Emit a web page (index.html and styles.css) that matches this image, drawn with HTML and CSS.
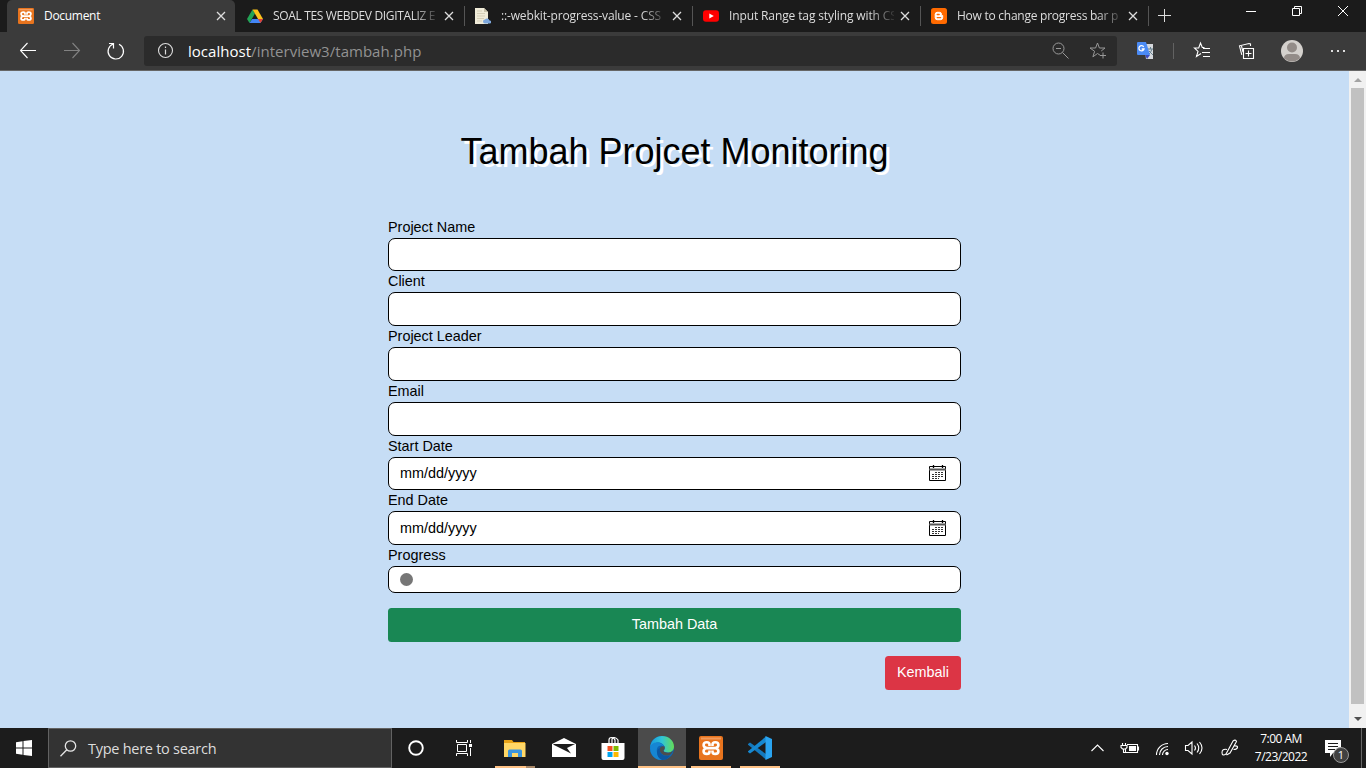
FILE: index.html
```html
<!DOCTYPE html>
<html lang="en">
<head>
<meta charset="utf-8">
<title>Document</title>
<link rel="stylesheet" href="styles.css">
</head>
<body>
<svg width="0" height="0" class="defs">
  <symbol id="close" viewBox="0 0 10 10"><path d="M1 1l8 8M9 1L1 9" fill="none" stroke="#ddd" stroke-width="1.3"/></symbol>
  <symbol id="xampp" viewBox="0 0 24 24">
    <rect width="24" height="24" rx="2" fill="#e8741e"/><path d="M2 1.500h20v2H2z" fill="#f29a5c"/>
    <g fill="none" stroke="#fff" stroke-width="2.600" stroke-linejoin="round"><path d="M10.500 10V8.500Q10.500 6.300 7.800 6.300Q4.600 6.300 4.600 9Q4.600 11.200 7.500 12.100Q4.600 13 4.600 15.200Q4.600 17.900 7.800 17.900Q10.500 17.900 10.500 15.700V14.500"/><path d="M13.500 10V8.500Q13.500 6.300 16.200 6.300Q19.400 6.300 19.400 9Q19.400 11.200 16.500 12.100Q19.400 13 19.400 15.200Q19.400 17.900 16.200 17.900Q13.500 17.900 13.500 15.700V14.500M7.500 12.100h9"/></g>
  </symbol>
  <symbol id="calendar" viewBox="0 0 18 18">
    <path d="M.5 2.500h16v14h-16z" fill="#fff" stroke="#000"/><path d="M0 5.500h17" stroke="#555" stroke-width="2"/>
    <path d="M4.500 1v3M13.500 1v3" stroke="#000" stroke-width="1.300"/>
    <path d="M6 8.500h9M3 10.500h12M3 12.500h12M3 14.500h7" stroke="#333" stroke-dasharray="2 1"/>
  </symbol>
</svg>
<div class="screen">
  <header class="tabs">
    <div class="tab active"><svg class="fav"><use href="#xampp"/></svg><span class="title t1">Document</span><svg class="x"><use href="#close"/></svg></div>
    <div class="tab"><svg class="fav" viewBox="0 0 16 16"><path d="M5.500 1.500L0 11l2.500 4L8 5.500z" fill="#23a455"/><path d="M5.500 1.500h5L16 11h-5z" fill="#fcc21b"/><path d="M5.200 11H16l-2.500 4h-11z" fill="#4285f4"/><path d="M11 11h5l-2.500 4z" fill="#e34133"/></svg><span class="title t2 fade">SOAL TES WEBDEV DIGITALIZ E</span><svg class="x"><use href="#close"/></svg></div>
    <div class="tab"><svg class="fav" viewBox="0 0 16 16"><path d="M0 0h9l4 4v12H0z" fill="#f0ecd9"/><path d="M9 0v4h4z" fill="#c7c2aa"/><path d="M2 3h5M2 5.500h8M2 8h8M2 10.500h7M2 13h5" stroke="#d5cfb8"/><path d="M10 15.500a2 2 0 0 1 0-4a2.500 2.500 0 0 1 4.500 1a1.500 1.500 0 0 1 .5 3z" fill="#7da7dc"/></svg><span class="title t3 fade">::-webkit-progress-value - CSS</span><svg class="x"><use href="#close"/></svg></div>
    <div class="tab"><svg class="fav" viewBox="0 0 16 16"><rect y="2.300" width="16" height="11.400" rx="3" fill="#f00"/><path d="M6.300 5.500v5l4.500-2.500z" fill="#fff"/></svg><span class="title t4 fade">Input Range tag styling with CS</span><svg class="x"><use href="#close"/></svg></div>
    <div class="tab"><svg class="fav" viewBox="0 0 16 16"><rect width="16" height="16" rx="2.500" fill="#ff6a00"/><path d="M6 4.300h2.500a2 2 0 0 1 2 2c0 1 .3 1.200 1.200 1.200v2a2.200 2.200 0 0 1-2.200 2.200H6.200a2 2 0 0 1-2-2V6.200A2 2 0 0 1 6 4.300z" fill="#fff" stroke="#fff" stroke-width="1"/><path d="M6.200 6.500h2M6.200 9.600h3.500" stroke="#ff6a00" stroke-width="1.300" stroke-linecap="round"/></svg><span class="title t5 fade">How to change progress bar p</span><svg class="x"><use href="#close"/></svg></div>
    <svg class="newtab" viewBox="0 0 14 14"><path d="M6.500 0v13M0 6.500h13" stroke="#ddd"/></svg>
    <svg class="winctl" viewBox="0 0 106 14"><g fill="none" stroke="#fff"><path d="M0 7.500h10M46.500 4.500h7v7h-7zM48.500 4.500v-2h7v7h-2M92 2l10 10M102 2L92 12"/></g></svg>
  </header>
  <div class="toolbar">
    <svg class="nav" viewBox="0 0 112 20"><g fill="none" stroke-width="1.100"><path d="M16 9.500H.5M7.500 2L.5 9.500L7.500 17" stroke="#fff"/><path d="M44 9.500h15.500M52.500 2l7 7.500l-7 7.500" stroke="#828282"/><path d="M93.300 3A7.700 7.700 0 1 0 99 3.300M93.500 7.500V2.500H89" stroke="#fff" stroke-width="1.200"/></g></svg>
    <div class="address">
      <svg class="info" viewBox="0 0 16 16"><circle cx="8.500" cy="7.500" r="7" fill="none" stroke="#ddd" stroke-width="1.100"/><path d="M8.500 6.500v5M8.500 3.500v1.500" stroke="#ddd" stroke-width="1.200"/></svg>
      <span class="url"><b>localhost</b>/interview3/tambah.php</span>
      <svg class="addricons" viewBox="0 0 56 18"><g fill="none" stroke="#999"><circle cx="6.500" cy="6.500" r="5.500"/><path d="M4 6.500h5M10.500 10.500l6 6"/><path d="M48.500 13.500l-3-2l-4.600 3.300l1.700-5.500l-4.600-3.300h5.600L45.500 1l1.900 5h5.600l-3.800 3M51 10.500v6M48 13.500h6"/></g></svg>
    </div>
    <svg class="exticons" viewBox="0 0 206 26">
      <path d="M7 6h9v15H9z" fill="#d6d9dd"/><path d="M11 11h5M13.500 9v2M15 11q-1 4-4 6M12 13l4 4" stroke="#66808d" fill="none"/>
      <path d="M1 4h8l4 13H1q-1 0-1-1V5q0-1 1-1z" fill="#4b8bf5"/><path d="M8 17h5l-3 4z" fill="#3c4dc0"/><path d="M6.700 8.900A2.600 2.600 0 1 0 7 11H4.700" fill="none" stroke="#fff" stroke-width="1.300"/>
      <path d="M36.500 5v16" stroke="#626262"/>
      <g fill="none" stroke="#fff" stroke-width="1.100"><path d="M67.500 9.500h-2.200L63.500 5l-1.800 5H57.500l3.500 3.300l-1.500 5.200l4.500-3M66 10.500h7M65 14.500h8M66 18.500h7"/><path d="M106.500 10.500h10v10h-10zM111.500 12.500v6M108.500 15.500h6M113.500 8V6l-1.500-.5l-9.500 2.300l2.300 9M106 14l-1.500-6"/></g>
      <circle cx="155" cy="13" r="11" fill="#d4d1cd"/><circle cx="155" cy="9.500" r="5" fill="#938c88"/><path d="M147 20.500q0-4.500 5-4.500h6q5 0 5 4.500q-8 6-16 0z" fill="#938c88"/>
      <path d="M194 12h2v2h-2zM200 12h2v2h-2zM206 12h2v2h-2z" fill="#ddd"/>
    </svg>
  </div>
  <div class="viewport">
    <main>
      <h1>Tambah Projcet Monitoring</h1>
      <form>
        <div class="row"><label>Project Name</label><div class="field"></div></div>
        <div class="row"><label>Client</label><div class="field"></div></div>
        <div class="row"><label>Project Leader</label><div class="field"></div></div>
        <div class="row"><label>Email</label><div class="field"></div></div>
        <div class="row"><label>Start Date</label><div class="field"><span>mm/dd/yyyy</span><svg class="cal"><use href="#calendar"/></svg></div></div>
        <div class="row"><label>End Date</label><div class="field"><span>mm/dd/yyyy</span><svg class="cal"><use href="#calendar"/></svg></div></div>
        <div class="row"><label>Progress</label><div class="field range"><i class="thumb"></i></div></div>
        <div class="btn submit">Tambah Data</div>
        <div class="btn back">Kembali</div>
      </form>
    </main>
    <div class="scroll"><i class="up"></i><i class="bar"></i><i class="down"></i></div>
  </div>
  <footer class="taskbar">
    <div class="start"><svg width="16" height="16" viewBox="0 0 16 16"><path d="M0 2.200L6.500 1.300V7.500H0zM7.500 1.100L16 0v7.500H7.500zM0 8.500h6.500v6.200L0 13.800zM7.500 8.500H16V16l-8.500-1.100z" fill="#fff"/></svg></div>
    <div class="search"><svg width="17" height="17" viewBox="0 0 17 17"><g fill="none" stroke="#e5e5e5" stroke-width="1.300"><circle cx="10.500" cy="6" r="5.200"/><path d="M6.800 9.800L.5 16.300"/></g></svg><span>Type here to search</span></div>
    <div class="apps">
      <div class="app"><svg width="16" height="16"><circle cx="8" cy="8" r="6.800" fill="none" stroke="#fff" stroke-width="1.900"/></svg></div>
      <div class="app view"><svg width="17" height="16"><g fill="none" stroke="#fff"><path d="M1.500 4.500h9v7h-9zM.5 0v2.500h11V0M.5 16v-2.500h11V16M14.500 0v3M14.500 8v8"/></g><path d="M13 4h3v3h-3z" fill="#fff"/></svg></div>
      <div class="app run folder"><svg width="22" height="19" viewBox="0 0 22 19"><path d="M0 1h8l1.500 2H21v15H0z" fill="#e8a317"/><path d="M0 4h21.500v14H0z" fill="#ffd766"/><path d="M4 18v-6q0-1.500 1.500-1.500h11Q18 10.500 18 12v6h-4v-4H8v4z" fill="#3b95dd"/><path d="M8 14h6v4H8z" fill="#ffd766"/></svg></div>
      <div class="app"><svg width="24" height="20"><path d="M0 6L12 0l12 6v13H0z" fill="#fff"/><path d="M1 6h22l-8 4l4 5.500L2 7z" fill="#1c1c1c"/></svg></div>
      <div class="app"><svg width="24" height="24" viewBox="0 0 24 24"><path d="M8 7V4q0-2.500 2.500-2.500T14 4v3M11 7V3q3-3 6 1v3" fill="none" stroke="#fff" stroke-width="1.200"/><path d="M.5 7h23v15q0 2-2 2h-19q-2 0-2-2z" fill="#fff"/><path d="M6.500 10h5v5h-5z" fill="#f25022"/><path d="M12.500 10h5v5h-5z" fill="#7fba00"/><path d="M6.500 16h5v5h-5z" fill="#00a4ef"/><path d="M12.500 16h5v5h-5z" fill="#ffb900"/></svg></div>
      <div class="app current"><svg width="24" height="24" viewBox="0 0 24 24"><defs><linearGradient id="e1"><stop offset="0" stop-color="#1698df"/><stop offset=".5" stop-color="#31c5d6"/><stop offset="1" stop-color="#65dc55"/></linearGradient></defs><circle cx="12" cy="12" r="12" fill="#0d65b5"/><path d="M0 11.500C1 4 6 0 12 0c7 0 12 5 12 10.500c0 4-3 6-6 6c-3 0-4.500-1-4.500-2q1.500-1 1.200-3C14 7.500 10 6 7 6.500Q2 7.500 0 11.500z" fill="url(#e1)"/><path d="M0 12q1-5.500 7-5.500c4 0 7 2.500 7.500 5q-2-3-5.500-1.500c-3 1.500-3 7 0 10.500q1.500 2.500 4.500 3.300Q6 25 2 19Q0 16 0 12z" fill="#1686d3"/><path d="M14.700 10.500q.5 2.500-1.200 4q0 2 4.500 2.200q3 0 5-2q-1 2.500-3 4.300q-5 1.500-8-1t-2-6q1-2.500 4.700-1.500z" fill="#4d4d4d"/><path d="M10 12q-1 4 2 6.500t8 1Q17 24 12 24Q7 22 7 16q0-3 3-4z" fill="#0c57a2"/></svg></div>
      <div class="app run"><svg width="24" height="24"><use href="#xampp"/></svg></div>
      <div class="app run"><svg width="24" height="24" viewBox="0 0 24 24"><path d="M0 8l2-1.500L18 18v5.500L0 8.800z" fill="#1479bd"/><path d="M0 16l2 1.500L18 6V.5L0 15.200z" fill="#1688d0"/><path d="M17.500 0L24 3v18l-6.500 3z" fill="#2aa4f0"/></svg></div>
    </div>
    <svg class="tray" viewBox="0 0 148 20"><g fill="none" stroke="#fff" stroke-width="1.100"><path d="M.5 13L6.500 7l6 6"/><path d="M36 6.500h10.500v8h-12v-4M47.500 8.500v4M31.500 5v2M34.500 5v2M30 7.500h6v2l-1.500 1.500h-3L30 9.500zM32.500 11v3.500h2"/><path d="M65.500 17A11.500 11.500 0 0 1 77 5.500M68.500 17A8.500 8.500 0 0 1 77 8.500M71.500 17A5.500 5.500 0 0 1 77 11.500"/><path d="M94.500 7.500h2.500l4-3.500v12l-4-3.500h-2.500zM103.500 7.500q2 2.500 0 5M106 5.500q3.500 4.500 0 9M108.500 4q5 6 0 12"/><path d="M136 11.500q-5-1-5 3t4 1.500l7-13q2.500-2 3.500 .5l-6.500 11.500l-3.500 2M142.500 8q4.500-.5 4 1.500t-4 2"/></g><path d="M38 8h7v5h-7z" fill="#fff"/><circle cx="76" cy="15.500" r="1.700" fill="#fff"/></svg>
    <div class="clock"><span>7:00 AM</span><span>7/23/2022</span></div>
    <div class="notice"><svg width="17" height="18"><path d="M0 0h16v13H8l-3 4v-4H0z" fill="#fff"/><path d="M3 3.500h10M3 6.500h10M3 9.500h7" stroke="#1c1c1c"/></svg><span class="badge">1</span></div>
    <i class="edge"></i>
  </footer>
</div>
</body>
</html>
```
FILE: styles.css
```css
* { box-sizing: border-box; }
body { margin: 0; font-family: "Open Sans", "Noto Sans", sans-serif; overflow: hidden; }
svg { display: block; flex: none; }
.defs { position: absolute; }
.screen { width: 1366px; height: 768px; display: flex; flex-direction: column; }

.tabs { height: 32px; background: #1b1b1b; display: flex; padding-left: 7px; }
.tab { width: 228px; height: 32px; display: flex; align-items: center; padding: 0 11px 0 10px; position: relative; color: #ddd; font-size: 12px; }
.tab + .tab::after { content: ""; position: absolute; right: 0; top: 6px; width: 1px; height: 20px; background: #555; }
.tab.active { background: #3b3b3b; border-radius: 5px 5px 0 0; color: #fff; padding: 0 9px 0 11px; margin-right: 2px; }
.fav { width: 16px; height: 16px; }
.title { width: 165px; margin-left: 10px; white-space: nowrap; line-height: 18px; }
.t1 { letter-spacing: -.3px; }
.t2 { letter-spacing: -.35px; }
.t3 { letter-spacing: -.15px; }
.t4 { letter-spacing: -.12px; }
.t5 { letter-spacing: -.25px; }
.fade { -webkit-mask-image: linear-gradient(90deg, #000 140px, transparent 168px); }
.x { width: 10px; height: 10px; margin-left: auto; }
.newtab { width: 14px; height: 14px; margin: 9px 0 0 9px; }
.winctl { width: 106px; height: 14px; margin: 4px 14px 0 auto; }

.toolbar { height: 39px; background: #3b3b3b; border-bottom: 1px solid #666; display: flex; align-items: center; padding-left: 20px; }
.nav { width: 112px; height: 20px; margin-right: 12px; }
.address { width: 973px; height: 30px; background: #2b2b2b; border-radius: 3px; display: flex; align-items: center; padding: 0 9px 0 13px; }
.info { width: 16px; height: 16px; margin-right: 15px; overflow: visible; }
.url { font-size: 15px; color: #929292; white-space: nowrap; letter-spacing: .03px; }
.url b { font-weight: 400; color: #fff; }
.addricons { width: 56px; height: 18px; margin-left: auto; }
.exticons { width: 206px; height: 26px; margin-left: 20px; overflow: visible; }

.viewport { height: 657px; display: flex; font-family: "Liberation Sans", Arial, sans-serif; background: #c6ddf5; }
main { width: 1349px; display: flex; flex-direction: column; align-items: center; }
h1 { font-size: 36px; font-weight: 400; line-height: 43px; margin: 59px 0 43.620px; text-shadow: 3px 3px 0 #fff; white-space: nowrap; color: #000; }
form { width: 573px; font-size: 14.400px; color: #000; display: flex; flex-direction: column; }
.row label { display: block; height: 21.150px; line-height: 21.600px; }
.field { height: 33.600px; border: 1px solid #000; border-radius: 7px; background: #fff; display: flex; align-items: center; justify-content: space-between; padding: 0 13px 0 11px; }
.cal { width: 18px; height: 18px; }
.range { height: 27px; }
.thumb { width: 13px; height: 13px; border-radius: 50%; background: #767676; }
.btn { height: 34px; border-radius: 3.500px; color: #fff; text-align: center; line-height: 33px; }
.submit { background: #198754; margin-top: 15px; }
.back { background: #dc3545; width: 76px; align-self: flex-end; margin-top: 14px; }
.scroll { width: 17px; background: #f1f1f1; display: flex; flex-direction: column; align-items: center; }
.up { border: 4px solid transparent; border-top: 0; border-bottom: 4px solid #a3a3a3; margin: 7px 0 6px; }
.bar { width: 13px; height: 616px; background: #c1c1c1; }
.down { border: 4px solid transparent; border-bottom: 0; border-top: 4px solid #505050; margin-top: 13px; }

.taskbar { height: 40px; background: #1c1c1c; display: flex; color: #fff; }
.start { width: 48px; display: flex; align-items: center; justify-content: center; }
.search { width: 344px; background: #333; border: 1px solid #626262; display: flex; align-items: center; gap: 11px; padding-left: 11px; font-size: 14.500px; letter-spacing: -.27px; color: #ddd; }
.apps { display: grid; grid-template-columns: 48px 50px 49px 49px 50px 48px 49px 49px; }
.app { display: flex; align-items: center; justify-content: center; position: relative; }
.view { padding-right: 2px; }
.run::after { content: ""; position: absolute; left: 5px; right: 4px; bottom: 0; height: 2px; background: #ffc285; }
.folder::after { background: linear-gradient(90deg, #ffc285 31px, #a98868 31px); }
.current { background: #4b4b4b; border-bottom: 2px solid #ffc285; padding-top: 2px; }
.tray { width: 148px; height: 20px; margin: 10px 1px 0 auto; }
.clock { width: 74px; margin-left: 4px; display: flex; flex-direction: column; align-items: center; font-size: 12px; letter-spacing: -.5px; line-height: 18px; padding-top: 2px; white-space: nowrap; }
.notice { width: 36px; margin-left: 7px; position: relative; padding: 12px 0 0; }
.badge { position: absolute; left: 8px; top: 19px; width: 16px; height: 16px; border-radius: 50%; border: 1px solid #999; background: #414141; font-size: 11px; line-height: 14px; text-align: center; }
.edge { width: 1px; background: #666; margin-right: 4px; }
```
